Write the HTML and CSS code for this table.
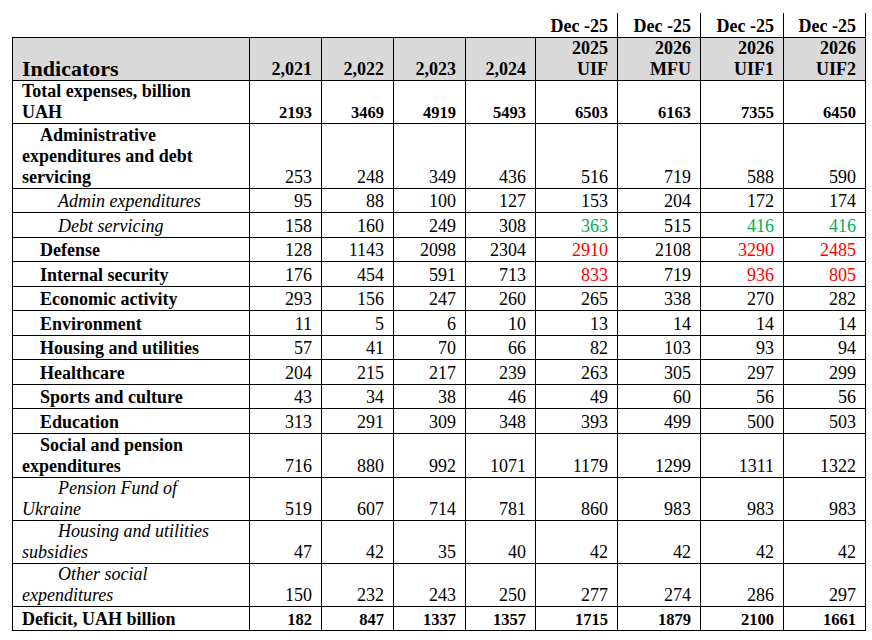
FILE: index.html
```html
<!DOCTYPE html>
<html lang="en">
<head>
<meta charset="utf-8">
<title>Indicators</title>
<link rel="stylesheet" href="styles.css">
</head>
<body>
<table class="budget">
  <colgroup>
    <col class="c-label">
    <col class="c-yr"><col class="c-yr"><col class="c-yr"><col class="c-yr4">
    <col class="c-fc"><col class="c-fc2"><col class="c-fc2"><col class="c-fc">
  </colgroup>
  <thead>
    <tr class="top h-top">
      <td></td><td></td><td></td><td></td><td></td>
      <th class="dec">Dec -25</th>
      <th class="dec">Dec -25</th>
      <th class="dec">Dec -25</th>
      <th class="dec">Dec -25</th>
    </tr>
    <tr class="head h2">
      <th class="title">Indicators</th>
      <th>2,021</th><th>2,022</th><th>2,023</th><th>2,024</th>
      <th>2025<br>UIF</th><th>2026<br>MFU</th><th>2026<br>UIF1</th><th>2026<br>UIF2</th>
    </tr>
  </thead>
  <tbody>
    <tr class="h2 total">
      <td class="lbl b">Total expenses, billion UAH</td>
      <td>2193</td><td>3469</td><td>4919</td><td>5493</td><td>6503</td><td>6163</td><td>7355</td><td>6450</td>
    </tr>
    <tr class="h3">
      <td class="lbl b l1">Administrative expenditures and debt servicing</td>
      <td>253</td><td>248</td><td>349</td><td>436</td><td>516</td><td>719</td><td>588</td><td>590</td>
    </tr>
    <tr class="h1">
      <td class="lbl i l2">Admin expenditures</td>
      <td>95</td><td>88</td><td>100</td><td>127</td><td>153</td><td>204</td><td>172</td><td>174</td>
    </tr>
    <tr class="h1">
      <td class="lbl i l2">Debt servicing</td>
      <td>158</td><td>160</td><td>249</td><td>308</td><td class="up">363</td><td>515</td><td class="up">416</td><td class="up">416</td>
    </tr>
    <tr class="h1">
      <td class="lbl b l1">Defense</td>
      <td>128</td><td>1143</td><td>2098</td><td>2304</td><td class="hot">2910</td><td>2108</td><td class="hot">3290</td><td class="hot">2485</td>
    </tr>
    <tr class="h1">
      <td class="lbl b l1">Internal security</td>
      <td>176</td><td>454</td><td>591</td><td>713</td><td class="hot">833</td><td>719</td><td class="hot">936</td><td class="hot">805</td>
    </tr>
    <tr class="h1">
      <td class="lbl b l1">Economic activity</td>
      <td>293</td><td>156</td><td>247</td><td>260</td><td>265</td><td>338</td><td>270</td><td>282</td>
    </tr>
    <tr class="h1">
      <td class="lbl b l1">Environment</td>
      <td>11</td><td>5</td><td>6</td><td>10</td><td>13</td><td>14</td><td>14</td><td>14</td>
    </tr>
    <tr class="h1">
      <td class="lbl b l1">Housing and utilities</td>
      <td>57</td><td>41</td><td>70</td><td>66</td><td>82</td><td>103</td><td>93</td><td>94</td>
    </tr>
    <tr class="h1">
      <td class="lbl b l1">Healthcare</td>
      <td>204</td><td>215</td><td>217</td><td>239</td><td>263</td><td>305</td><td>297</td><td>299</td>
    </tr>
    <tr class="h1">
      <td class="lbl b l1">Sports and culture</td>
      <td>43</td><td>34</td><td>38</td><td>46</td><td>49</td><td>60</td><td>56</td><td>56</td>
    </tr>
    <tr class="h1">
      <td class="lbl b l1">Education</td>
      <td>313</td><td>291</td><td>309</td><td>348</td><td>393</td><td>499</td><td>500</td><td>503</td>
    </tr>
    <tr class="h2b">
      <td class="lbl b l1">Social and pension expenditures</td>
      <td>716</td><td>880</td><td>992</td><td>1071</td><td>1179</td><td>1299</td><td>1311</td><td>1322</td>
    </tr>
    <tr class="h2">
      <td class="lbl i l2">Pension Fund of Ukraine</td>
      <td>519</td><td>607</td><td>714</td><td>781</td><td>860</td><td>983</td><td>983</td><td>983</td>
    </tr>
    <tr class="h2">
      <td class="lbl i l2">Housing and utilities subsidies</td>
      <td>47</td><td>42</td><td>35</td><td>40</td><td>42</td><td>42</td><td>42</td><td>42</td>
    </tr>
    <tr class="h2">
      <td class="lbl i l2">Other social expenditures</td>
      <td>150</td><td>232</td><td>243</td><td>250</td><td>277</td><td>274</td><td>286</td><td>297</td>
    </tr>
    <tr class="h1 total">
      <td class="lbl b">Deficit, UAH billion</td>
      <td>182</td><td>847</td><td>1337</td><td>1357</td><td>1715</td><td>1879</td><td>2100</td><td>1661</td>
    </tr>
  </tbody>
</table>
</body>
</html>
```
FILE: styles.css
```css
html, body {
  margin: 0;
  padding: 0;
  background: #ffffff;
}

body {
  padding: 13px 0 0 12px;
  font-family: "Liberation Serif", "Times New Roman", serif;
  color: #000000;
}

.budget {
  border-collapse: collapse;
  table-layout: fixed;
  width: 852px;
  font-size: 18px;
  line-height: 21px;
}

.c-label { width: 237px; }
.c-yr { width: 72px; }
.c-yr4 { width: 70px; }
.c-fc { width: 82px; }
.c-fc2 { width: 83px; }

.budget td,
.budget th {
  border: 1px solid #000000;
  padding: 0 9px 0 9px;
  text-align: right;
  vertical-align: bottom;
  font-weight: normal;
  white-space: nowrap;
  overflow: hidden;
}

.budget .top td {
  border: none;
}

.budget .top th.dec {
  border-top: none;
  border-left: none;
  border-bottom: none;
  font-weight: bold;
}

.budget .top th.dec + th.dec {
  border-left: 1px solid #000000;
}

.h-top { height: 24px; }
.h1 { height: 24.5px; }
.h2 { height: 43px; }
.h2b { height: 44px; }
.h3 { height: 65px; }

.budget .head th {
  background: #d9d9d9;
  font-weight: bold;
}

.budget .head th.title {
  text-align: left;
  font-size: 22px;
  padding-left: 9px;
  padding-bottom: 1px;
}

.budget td.lbl {
  text-align: left;
  white-space: normal;
  padding-left: 9px;
  padding-right: 14px;
}

.budget td.b { font-weight: bold; }
.budget td.i { font-style: italic; }
.budget td.l1 { text-indent: 18px; }
.budget td.l2 { text-indent: 36px; }

.budget .total td {
  font-weight: bold;
  font-size: 16.5px;
}

.budget .total td.lbl {
  font-size: 18px;
}

.budget td.up { color: #00b050; }
.budget td.hot { color: #ff0000; }
```
